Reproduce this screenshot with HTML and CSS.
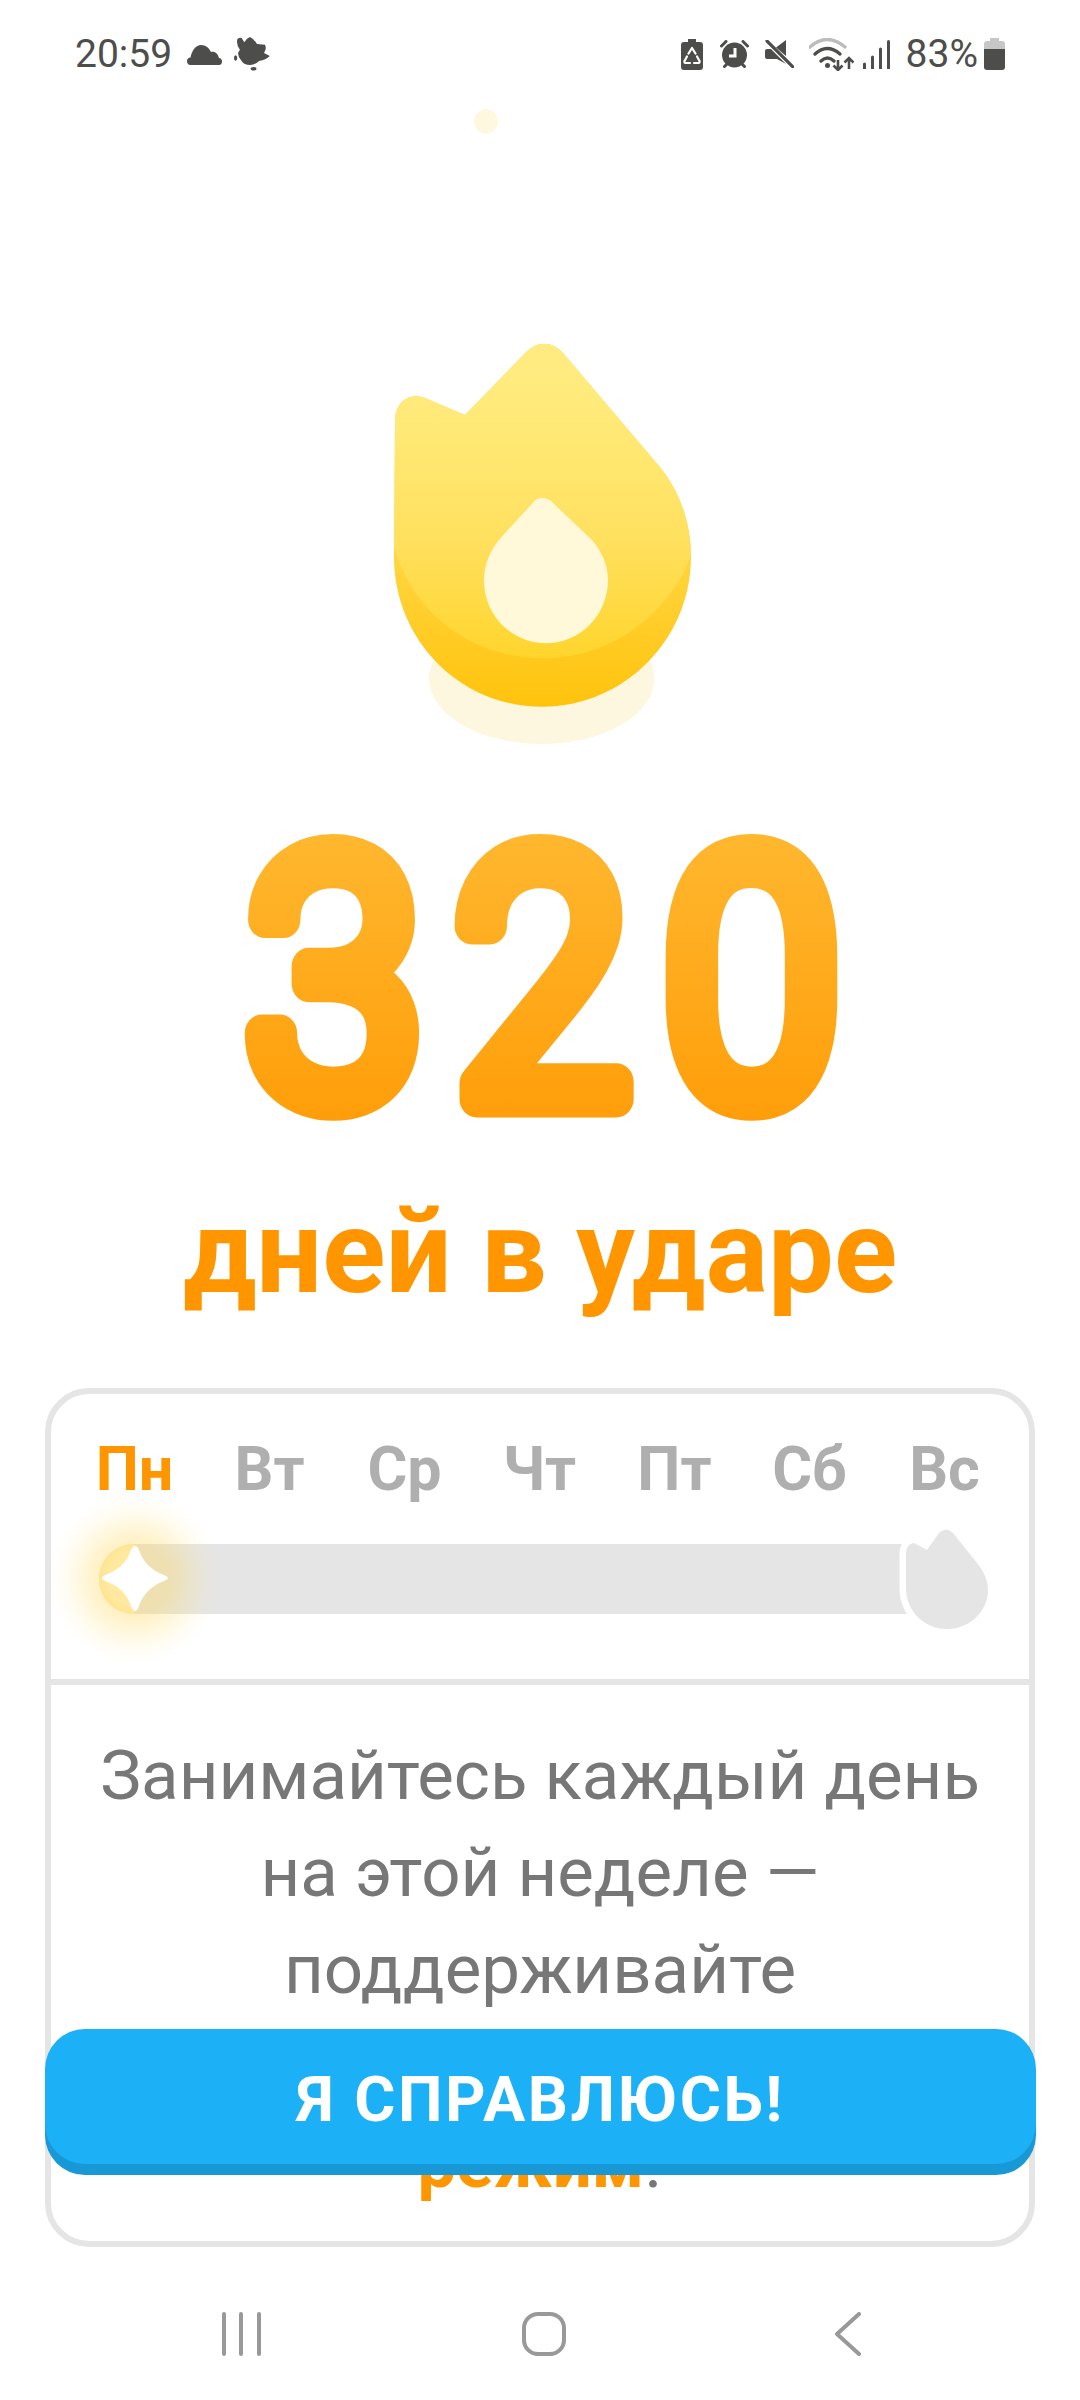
FILE: index.html
```html
<!DOCTYPE html>
<html lang="ru">
<head>
<meta charset="utf-8">
<title>320 дней в ударе</title>
<link rel="stylesheet" href="styles.css">
</head>
<body>
<div class="screen">
  <header class="status">
    <div class="status-left">
      <span class="status-text">20:59</span>
      <svg class="ic-cloud" viewBox="0 0 35 20"><path class="ink" d="M3.500 20C1 20 0 18 0 16 0 14 1.500 12.500 3.500 12.500 5 5 9 0 14 0 19 0 22 3 24 7 28 6 31 9 32 13 34 13 35 15 35 16.500 35 18.500 34 20 32 20Z"/></svg>
      <svg class="ic-owl" viewBox="0 0 36 34"><path class="ink" d="M3.400 2Q6 0 7.600 1L10.300 5.300Q13 1 16 0 20 2 23 7L31 7.700Q33 12 30 16L35.800 19Q32 23 25 24 21 28 16 28 10 28 7.600 24 4 20 4 16L5.900 12.700Q2 8 3.400 2Z"/><ellipse class="ink" cx="1.600" cy="21" rx="1.600" ry="2.700"/><ellipse class="ink" cx="19.600" cy="31.700" rx="3" ry="1.800"/></svg>
    </div>
    <div class="status-right">
      <svg class="ic-recycle" viewBox="0 0 22 31"><path class="ink" d="M7 0h8v3h4q3 0 3 3v22q0 3-3 3H3q-3 0-3-3V6q0-3 3-3h4Z"/><path class="recycle-mark" d="M7.500 14.500 11 9l3.500 5.500M16 17.500l2.500 4.500q.5 2-1 2H13M9 24H4.500q-1.500 0-1-2L6 17.500"/></svg>
      <svg class="ic-alarm" viewBox="0 0 29 28"><circle class="ink" cx="14.500" cy="15" r="12.500"/><path class="alarm-line" d="M1.500 6 6 1.500M27.500 6 23 1.500M4.500 26.500 7 24M24.500 26.500 22 24"/><path class="alarm-hand" d="M15 8V16H9"/></svg>
      <svg class="ic-mute" viewBox="0 0 29 28"><path class="ink" d="M0 11q0-2 2-2h4l15 15L12 19H2q-2 0-2-2ZM11 7.500 21 0v16Z"/><path class="mute-slash" d="M2 1 28 27"/></svg>
      <svg class="ic-wifi" viewBox="0 0 45 33"><path class="wifi-outer" d="M1 9Q18-6 36 9"/><path class="wifi-arc" d="M6 16Q18 5 31 16M12 23Q18.500 17 25 23"/><circle class="ink" cx="18.500" cy="27.500" r="2.500"/><path class="wifi-arrow" d="M29 22v10M24.500 27.500l4.500 4.500 4.500-4.500M40 31V20M35.500 24.500l4.500-4.500 4.500 4.500"/></svg>
      <svg class="ic-signal" viewBox="0 0 27 29"><path class="ink" d="M0 24q0-1.500 1.500-1.500T3 24v5H0ZM8 17q0-1.500 1.500-1.500T11 17v12H8ZM16 9q0-1.500 1.500-1.500T19 9v20h-3ZM24 1.500Q24 0 25.500 0T27 1.500V29h-3Z"/></svg>
      <span class="status-text pct">83%</span>
      <svg class="ic-battery" viewBox="0 0 21 32"><path class="batt-top" d="M6 0h9v3h3q3 0 3 3v5H0V6q0-3 3-3h3Z"/><path class="ink" d="M0 11h21v18q0 3-3 3H3q-3 0-3-3Z"/></svg>
    </div>
  </header>

  <svg class="hero" viewBox="0 108 1080 642" aria-hidden="true">
    <defs>
      <linearGradient id="flameBase" gradientUnits="userSpaceOnUse" x1="0" y1="600" x2="0" y2="1160">
        <stop offset="0" stop-color="#ffda4c"/>
        <stop offset="1" stop-color="#ffc30c"/>
      </linearGradient>
      <linearGradient id="flameTop" gradientUnits="userSpaceOnUse" x1="0" y1="150" x2="0" y2="1015">
        <stop offset="0" stop-color="#ffeb80"/>
        <stop offset=".25" stop-color="#ffe873"/>
        <stop offset=".6" stop-color="#ffe05e"/>
        <stop offset="1" stop-color="#ffd52c"/>
      </linearGradient>
      <clipPath id="flameClip">
        <path d="M105 300C107 250 140 218 190 232L315 285 495 100C530 62 575 62 610 100L890 430C960 510 993 610 993 710 993 960 790 1160 547 1160 300 1160 102 960 102 710Z"/>
      </clipPath>
    </defs>
    <ellipse class="dot" cx="486" cy="121.500" rx="12" ry="12.500"/>
    <g transform="translate(360 320) scale(.33333)">
      <ellipse class="flame-shadow" cx="545" cy="1075" rx="338" ry="197"/>
      <path fill="url(#flameBase)" d="M105 300C107 250 140 218 190 232L315 285 495 100C530 62 575 62 610 100L890 430C960 510 993 610 993 710 993 960 790 1160 547 1160 300 1160 102 960 102 710Z"/>
      <g clip-path="url(#flameClip)">
        <path fill="url(#flameTop)" d="M80 60H1010V650C960 860 770 1015 547 1015 330 1015 140 870 95 650Z"/>
      </g>
      <path class="drop" d="M520 547 425 650C390 690 372 735 372 780 372 885 455 970 558 970 660 970 744 885 744 780 744 730 720 680 680 645L578 548C560 530 535 530 520 547Z"/>
    </g>
  </svg>

  <svg class="count" viewBox="0 750 1080 410" role="img">
    <defs>
      <linearGradient id="countGrad" gradientUnits="userSpaceOnUse" x1="0" y1="836" x2="0" y2="1119">
        <stop offset="0" stop-color="#ffb72e"/>
        <stop offset="1" stop-color="#ff9e0a"/>
      </linearGradient>
    </defs>
    <text class="count-text" x="268 495 722" y="1099" fill="url(#countGrad)" stroke="url(#countGrad)">320</text>
  </svg>

  <h1 class="title">дней в ударе</h1>

  <section class="card">
    <div class="week">
      <div class="days">
        <span class="day day-on">Пн</span>
        <span class="day">Вт</span>
        <span class="day">Ср</span>
        <span class="day">Чт</span>
        <span class="day">Пт</span>
        <span class="day">Сб</span>
        <span class="day">Вс</span>
      </div>
      <div class="progress">
        <div class="track"><div class="fill"></div></div>
        <div class="glow"></div>
        <svg class="star" viewBox="0 0 66 66"><path d="M33 1C35 1 36 3 37 5 41 17 49 25 62 30 64 31 66 32 66 33 66 34 64 35 62 36 49 41 41 49 37 61 36 63 35 66 33 66 31 66 30 63 29 61 25 49 17 41 3 36 1 35 0 34 0 33 0 32 1 31 3 30 17 25 25 17 29 5 30 3 31 1 33 1Z"/></svg>
        <svg class="end-flame" viewBox="196 150 100 116"><path d="M206 184Q206 174 214 173L227 180 239 163Q246 156 253 163L277 193C285 203 288 212 288 220 288 241 270 259 247 259 224 259 206 241 206 218Z"/></svg>
      </div>
    </div>
    <p class="message">Занимайтесь каждый день на этой неделе —<br>поддерживайте<br><strong class="accent">ударный<br>режим</strong>.</p>
  </section>

  <button class="cta" type="button">Я СПРАВЛЮСЬ!</button>

  <nav class="navbar">
    <svg class="nav-recent" viewBox="0 0 40 44"><path d="M2 2V42M19 2V42M37 2V42"/></svg>
    <svg class="nav-home" viewBox="0 0 44 44"><rect x="2" y="2" width="40" height="40" rx="14"/></svg>
    <svg class="nav-back" viewBox="0 0 28 44"><path d="M25 2 3 22 25 42" /></svg>
  </nav>
</div>
</body>
</html>
```

FILE: styles.css
```css
* { box-sizing: border-box; }
html, body { margin: 0; padding: 0; background: #fff; }
body { font-family: Roboto, "Noto Sans", sans-serif; }
.screen { position: relative; width: 1080px; height: 2400px; overflow: hidden; background: #fff; }

/* status bar */
.status { height: 108px; padding: 0 75px; display: flex; justify-content: space-between; align-items: center; }
.status-left, .status-right { display: flex; align-items: center; }
.status-text { font-size: 39px; color: #4d4d4b; line-height: 44px; }
.pct { margin-left: 16px; margin-right: 6px; }
.ink { fill: #4d4d4b; }
.ic-cloud { width: 35px; height: 20px; margin-left: 15px; margin-top: 1px; }
.ic-owl { width: 36px; height: 34px; margin-left: 12px; }
.ic-recycle { width: 22px; height: 31px; }
.recycle-mark { fill: none; stroke: #fff; stroke-width: 2.2; stroke-linecap: round; stroke-linejoin: round; }
.ic-alarm { width: 29px; height: 28px; margin-left: 17px; }
.alarm-line { fill: none; stroke: #4d4d4b; stroke-width: 3; stroke-linecap: round; }
.alarm-hand { fill: none; stroke: #fff; stroke-width: 3; }
.ic-mute { width: 29px; height: 28px; margin-left: 16px; }
.mute-slash { fill: none; stroke: #4d4d4b; stroke-width: 3.2; stroke-linecap: round; }
.ic-wifi { width: 45px; height: 33px; margin-left: 15px; }
.wifi-outer { fill: none; stroke: #bcbcbc; stroke-width: 3.4; stroke-linecap: round; }
.wifi-arc { fill: none; stroke: #4d4d4b; stroke-width: 3.4; stroke-linecap: round; }
.wifi-arrow { fill: none; stroke: #4d4d4b; stroke-width: 2.6; }
.ic-signal { width: 27px; height: 29px; margin-left: 9px; }
.ic-battery { width: 21px; height: 32px; }
.batt-top { fill: #c6c6c6; }

/* hero */
.hero { display: block; width: 1080px; height: 642px; }
.dot { fill: #fff8e1; }
.flame-shadow { fill: #fef7df; }
.drop { fill: #fff9d9; }

.count { display: block; width: 1080px; height: 410px; }
.count-text { font-family: Roboto, sans-serif; font-weight: 300; font-size: 342px; stroke-width: 37px; stroke-linejoin: round; stroke-linecap: round; transform: scaleX(.92); }

.title { margin: 32px 0 0; text-align: center; font-size: 117px; line-height: 120px; font-weight: 700; color: #ff9600; }

/* card */
.card { margin: 76px 45px 0 45px; height: 859px; border: 6px solid #e5e5e5; border-radius: 44px; }
.week { padding-top: 40px; padding-bottom: 65px; border-bottom: 6px solid #e5e5e5; }
.days { display: grid; grid-template-columns: repeat(7, 135px); padding: 0 16px; }
.day { text-align: center; font-size: 61px; line-height: 70px; font-weight: 700; color: #afafaf; }
.day-on { color: #ff9600; }
.progress { position: relative; height: 70px; margin: 40px 33px 0 48px; }
.track { height: 70px; width: 830px; background: #e5e5e5; border-radius: 35px 0 0 35px; overflow: hidden; }
.fill { width: 36px; height: 70px; background: radial-gradient(circle at 36px 35px, #fff6d0 0, #fff3c8 55%, #ffdf90 100%); }
.glow { position: absolute; left: -49px; top: -50px; width: 170px; height: 170px; background: radial-gradient(circle closest-side, rgba(255,214,80,.38) 0, rgba(255,214,80,.34) 42%, rgba(255,220,100,.24) 60%, rgba(255,225,120,.1) 80%, rgba(255,225,130,0) 100%); }
.star { position: absolute; left: 3px; top: 1px; width: 66px; height: 66px; fill: #fff; }
.end-flame { position: absolute; left: 797px; top: -24px; width: 100px; height: 116px; overflow: visible; fill: #e5e5e5; stroke: #fff; stroke-width: 13px; stroke-linejoin: round; paint-order: stroke; }

.message { margin: 0; padding: 42px 20px 28px; text-align: center; font-size: 69px; line-height: 97px; color: #777; }
.accent { color: #ff9600; font-weight: 700; }

/* button */
.cta { position: absolute; left: 45px; top: 2029px; width: 991px; height: 135px; padding: 6px 0 0; border: 0; border-radius: 40px; background: #1cb0f6; box-shadow: 0 11px 0 #1899d6; color: #fff; font-family: Roboto, sans-serif; font-size: 63px; font-weight: 700; letter-spacing: 2.5px; }

/* navigation */
.navbar { position: absolute; left: 0; right: 0; bottom: 44px; height: 44px; }
.navbar svg { position: absolute; top: 0; height: 44px; fill: none; stroke: #999; stroke-width: 4; stroke-linecap: round; stroke-linejoin: round; }
.nav-recent { left: 222px; width: 40px; }
.nav-home { left: 522px; width: 44px; }
.nav-back { left: 834px; width: 28px; }
```
